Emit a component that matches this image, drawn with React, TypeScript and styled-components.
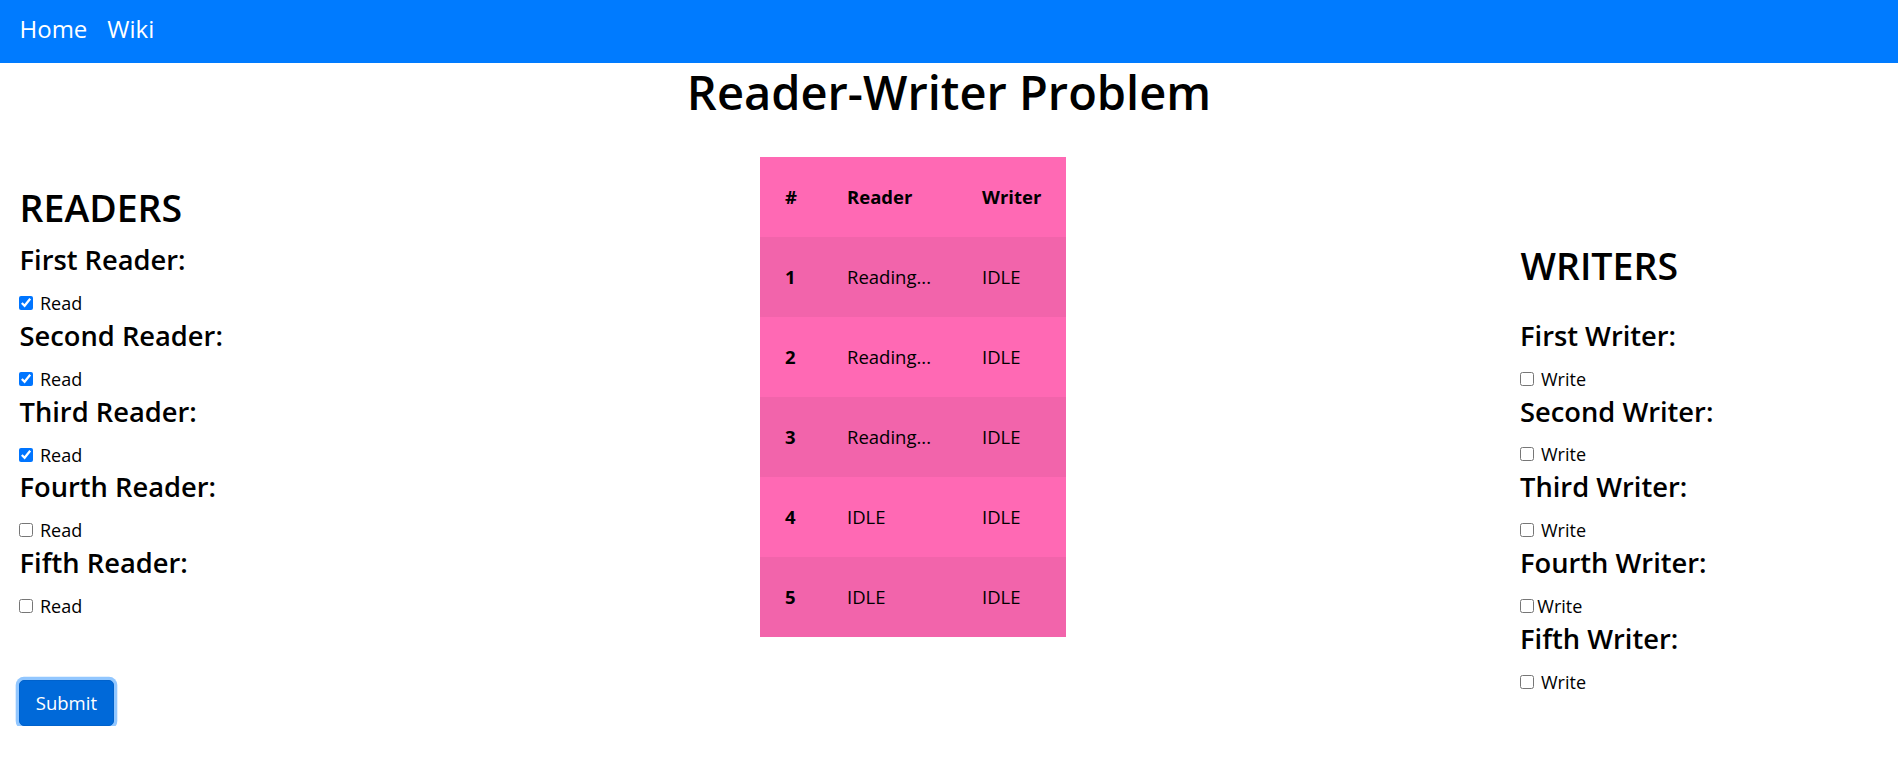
import React from "react";
import styled, { createGlobalStyle } from "styled-components";

const GlobalStyle = createGlobalStyle`
  html, body { margin: 0; padding: 0; background: #fff; }
  body {
    font-family: "Open Sans", "Noto Sans", Arial, sans-serif;
    color: #212529;
  }
  * { box-sizing: border-box; }
`;

const NavBar = styled.nav`
  height: 63px;
  background: #007bff;
  display: flex;
  align-items: flex-start;
  gap: 20px;
  padding: 11px 19.5px 0;
`;

const NavLink = styled.a`
  color: #fff;
  font-size: 24px;
  line-height: 36px;
  text-decoration: none;
  cursor: pointer;
`;

const Title = styled.h1`
  margin: 1.3px 0 0;
  font-size: 47px;
  line-height: 57.6px;
  font-weight: 600;
  text-align: center;
  color: #000;
`;

const Main = styled.div`
  display: grid;
  grid-template-columns: 760px 306px 1fr;
  align-items: start;
  margin-top: 35px;
`;

const Column = styled.div<{ $top: number; $left: number }>`
  display: flex;
  flex-direction: column;
  align-items: flex-start;
  padding-top: ${(p) => p.$top}px;
  padding-left: ${(p) => p.$left}px;
`;

const SectionTitle = styled.h1<{ $gap: number; $indent: number }>`
  margin: 0 0 ${(p) => p.$gap}px ${(p) => p.$indent}px;
  font-size: 37.5px;
  line-height: 46.2px;
  font-weight: 600;
  color: #000;
`;

const GroupTitle = styled.h3<{ $indent: number }>`
  margin: 0 0 14.3px ${(p) => p.$indent}px;
  font-size: 27.3px;
  line-height: 33.6px;
  font-weight: 600;
  color: #000;
`;

const CheckRow = styled.label`
  display: block;
  margin: 0 0 3.84px;
  font-size: 18px;
  line-height: 24px;
  color: #000;
`;

const Check = styled.input<{ $right: number }>`
  width: 14px;
  height: 14px;
  margin: 0 ${(p) => p.$right}px 1px 2.3px;
  vertical-align: baseline;
`;

const SubmitButton = styled.button`
  margin: 58.7px 0 0 2.3px;
  font-family: inherit;
  font-size: 18.5px;
  line-height: 28px;
  padding: 8px 15.5px;
  color: #fff;
  background: #0069d9;
  border: 1px solid #0062cc;
  border-radius: 5px;
  box-shadow: 0 0 0 3.3px rgba(38, 143, 255, 0.5);
  cursor: pointer;
`;

const Table = styled.table`
  border-collapse: collapse;
  table-layout: fixed;
  width: 306px;
  font-size: 18.5px;
  color: #000;
`;

const Row = styled.tr<{ $striped: boolean }>`
  background: ${(p) => (p.$striped ? "#f264ab" : "#ff69b4")};
`;

const HeadCell = styled.th<{ $w: number }>`
  width: ${(p) => p.$w}px;
  height: 80px;
  padding: 0 0 0 25px;
  text-align: left;
  font-weight: 700;
  vertical-align: middle;
`;

const Cell = styled.td<{ $bold?: boolean }>`
  height: 80px;
  padding: 0 0 0 25px;
  font-weight: ${(p) => (p.$bold ? 700 : 400)};
  vertical-align: middle;
  white-space: nowrap;
`;

const readers = [
  { label: "First Reader:", checked: true },
  { label: "Second Reader:", checked: true },
  { label: "Third Reader:", checked: true },
  { label: "Fourth Reader:", checked: false },
  { label: "Fifth Reader:", checked: false },
];

const writers = [
  { label: "First Writer:", space: true },
  { label: "Second Writer:", space: true },
  { label: "Third Writer:", space: true },
  { label: "Fourth Writer:", space: false },
  { label: "Fifth Writer:", space: true },
];

const rows = [
  { n: 1, r: "Reading...", w: "IDLE" },
  { n: 2, r: "Reading...", w: "IDLE" },
  { n: 3, r: "Reading...", w: "IDLE" },
  { n: 4, r: "IDLE", w: "IDLE" },
  { n: 5, r: "IDLE", w: "IDLE" },
];

export default function App() {
  return (
    <>
      <GlobalStyle />
      <NavBar>
        <NavLink>Home</NavLink>
        <NavLink>Wiki</NavLink>
      </NavBar>
      <Title>Reader-Writer Problem</Title>
      <Main>
        <Column $top={28} $left={17}>
          <SectionTitle $gap={12.1} $indent={2.5}>
            READERS
          </SectionTitle>
          {readers.map((r) => (
            <React.Fragment key={r.label}>
              <GroupTitle $indent={2.5}>{r.label}</GroupTitle>
              <CheckRow>
                <Check type="checkbox" defaultChecked={r.checked} $right={2} /> Read
              </CheckRow>
            </React.Fragment>
          ))}
          <SubmitButton>Submit</SubmitButton>
        </Column>
        <div>
          <Table>
            <thead>
              <Row $striped={false}>
                <HeadCell $w={62}>#</HeadCell>
                <HeadCell $w={135}>Reader</HeadCell>
                <HeadCell $w={109}>Writer</HeadCell>
              </Row>
            </thead>
            <tbody>
              {rows.map((row, i) => (
                <Row key={row.n} $striped={i % 2 === 0}>
                  <Cell $bold>{row.n}</Cell>
                  <Cell>{row.r}</Cell>
                  <Cell>{row.w}</Cell>
                </Row>
              ))}
            </tbody>
          </Table>
        </div>
        <Column $top={85.7} $left={452}>
          <SectionTitle $gap={30.1} $indent={2.5}>
            WRITERS
          </SectionTitle>
          {writers.map((w) => (
            <React.Fragment key={w.label}>
              <GroupTitle $indent={2}>{w.label}</GroupTitle>
              <CheckRow>
                <Check type="checkbox" $right={w.space ? 2 : 3} />
                {w.space ? " Write" : "Write"}
              </CheckRow>
            </React.Fragment>
          ))}
        </Column>
      </Main>
    </>
  );
}
